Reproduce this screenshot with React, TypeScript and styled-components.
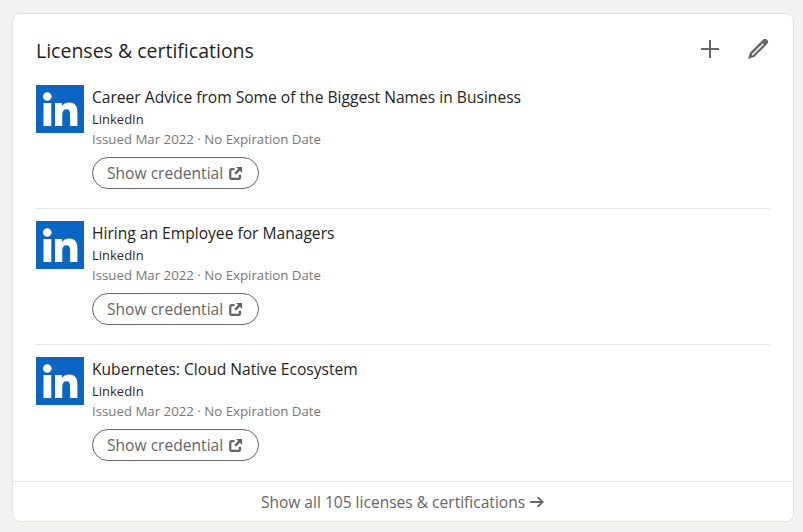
import React from 'react';
import styled, { createGlobalStyle } from 'styled-components';

const GlobalStyle = createGlobalStyle`
  html, body {
    margin: 0;
    padding: 0;
    background: #f2f2f0;
    font-family: "Open Sans", "Noto Sans", "Liberation Sans", sans-serif;
  }
`;

const Page = styled.div`
  width: 803px;
  height: 532px;
  box-sizing: border-box;
  padding: 13px 9px 10px 12px;
  overflow: hidden;
`;

const Card = styled.section`
  box-sizing: border-box;
  height: 509px;
  display: flex;
  flex-direction: column;
  background: #fff;
  border: 1px solid #e3e3e0;
  border-radius: 8px;
`;

const Header = styled.header`
  height: 71px;
  flex: none;
  box-sizing: border-box;
  padding: 23px 23px 0 23px;
  display: flex;
  justify-content: space-between;
`;

const Title = styled.h2`
  margin: 0;
  font-size: 19.5px;
  line-height: 27px;
  font-weight: 500;
  color: #1f1f1f;
`;

const Actions = styled.div`
  display: flex;
  gap: 24px;
`;

const IconButton = styled.button`
  width: 24px;
  height: 24px;
  padding: 0;
  border: 0;
  background: none;
  color: #666;
  display: block;
`;

const List = styled.ul`
  flex: 1;
  margin: 0;
  padding: 0 23px;
  list-style: none;
`;

const Item = styled.li`
  display: flex;
  gap: 8px;
  height: 136px;
  box-sizing: border-box;
  padding-top: 12px;
  border-bottom: 1px solid #e8e8e6;
  &:first-child {
    height: 124px;
    padding-top: 0;
  }
  &:last-child {
    border-bottom: 0;
  }
`;

const Logo = styled.svg`
  width: 48px;
  height: 48px;
  flex: none;
  display: block;
`;

const Body = styled.div`
  display: flex;
  flex-direction: column;
  align-items: flex-start;
`;

const Name = styled.div`
  font-size: 15.6px;
  line-height: 25px;
  color: #242424;
  font-weight: 500;
`;

const Issuer = styled.div`
  font-size: 13px;
  line-height: 18px;
  color: #2e2e2e;
`;

const Meta = styled.div`
  font-size: 13.25px;
  line-height: 22px;
  color: #777;
`;

const Credential = styled.button`
  box-sizing: border-box;
  margin-top: 7px;
  width: 167px;
  height: 32px;
  display: flex;
  align-items: center;
  padding: 0 0 0 14px;
  gap: 5px;
  border: 1px solid #666;
  border-radius: 16px;
  background: #fff;
  color: #666;
  font-family: inherit;
  font-size: 15.6px;
  font-weight: 500;
  white-space: nowrap;
`;

const Footer = styled.footer`
  height: 40px;
  flex: none;
  box-sizing: border-box;
  border-top: 1px solid #e8e8e6;
  display: flex;
  align-items: center;
  justify-content: center;
  gap: 4px;
  padding-top: 1px;
  color: #666;
  font-size: 15.55px;
  font-weight: 500;
`;

const certifications = [
  'Career Advice from Some of the Biggest Names in Business',
  'Hiring an Employee for Managers',
  'Kubernetes: Cloud Native Ecosystem',
];

function LinkedInLogo() {
  return (
    <Logo viewBox="0 0 48 48" aria-hidden="true">
      <rect width="48" height="48" fill="#0a66c2" />
      <circle cx="11.3" cy="11.5" r="4.3" fill="#fff" />
      <rect x="7.5" y="18" width="7.8" height="23" fill="#fff" />
      <path
        d="M19 18h7v3.1c1.2-2.2 3.8-3.7 7-3.7 6.2 0 8.4 3.8 8.4 9.8V41h-7.3V29.2c0-3-.9-5-3.5-5-2.9 0-4.3 2-4.3 5V41H19z"
        fill="#fff"
      />
    </Logo>
  );
}

function ExternalIcon() {
  return (
    <svg width="15" height="15" viewBox="0 0 16 16" aria-hidden="true">
      <path
        d="M7 3.2H4A1.6 1.6 0 0 0 2.4 4.8V12A1.6 1.6 0 0 0 4 13.6h7.2A1.6 1.6 0 0 0 12.8 12V9.2"
        fill="none"
        stroke="currentColor"
        strokeWidth="2.4"
      />
      <path d="M8.6 1h6.4v6.4l-2.3-2.3-4 4-1.9-1.9 4-4z" fill="currentColor" />
    </svg>
  );
}

function App() {
  return (
    <Page>
      <GlobalStyle />
      <Card>
        <Header>
          <Title>Licenses &amp; certifications</Title>
          <Actions>
            <IconButton aria-label="Add">
              <svg width="24" height="24" viewBox="0 0 24 24" fill="currentColor">
                <path d="M21 13h-8v8h-2v-8H3v-2h8V3h2v8h8z" />
              </svg>
            </IconButton>
            <IconButton aria-label="Edit">
              <svg width="24" height="24" viewBox="0 0 24 24" fill="currentColor">
                <path
                  fillRule="evenodd"
                  d="M21.13 2.86a3 3 0 0 0-4.17 0l-13 13L2 22l6.19-2L21.13 7a3 3 0 0 0 0-4.16zM6.6 18.4l-1-1L16.8 6.2l1 1z"
                />
              </svg>
            </IconButton>
          </Actions>
        </Header>
        <List>
          {certifications.map((name) => (
            <Item key={name}>
              <LinkedInLogo />
              <Body>
                <Name>{name}</Name>
                <Issuer>LinkedIn</Issuer>
                <Meta>Issued Mar 2022 · No Expiration Date</Meta>
                <Credential>
                  Show credential
                  <ExternalIcon />
                </Credential>
              </Body>
            </Item>
          ))}
        </List>
        <Footer>
          Show all 105 licenses &amp; certifications
          <svg width="16" height="16" viewBox="0 0 16 16" fill="currentColor">
            <path d="M9.2 2.4 15 8l-5.8 5.6-1.3-1.3 3.4-3.3H1.2V7h10.1L7.9 3.7z" />
          </svg>
        </Footer>
      </Card>
    </Page>
  );
}

export default App;
